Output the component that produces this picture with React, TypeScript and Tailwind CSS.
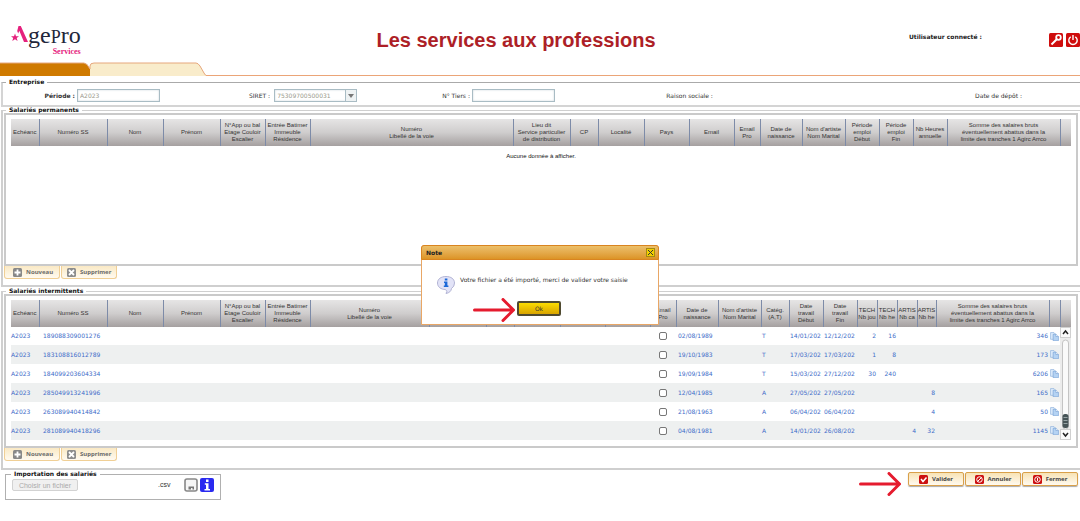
import React from "react";

type Col = { w: string; lines: string[] };

const identity: Col[] = [
  { w: "w-[28px]", lines: ["Echéanc"] },
  { w: "w-[68px]", lines: ["Numéro SS"] },
  { w: "w-[56px]", lines: ["Nom"] },
  { w: "w-[57px]", lines: ["Prénom"] },
  { w: "w-[45px]", lines: ["N°App ou bal", "Etage Couloir", "Escalier"] },
  { w: "w-[45px]", lines: ["Entrée Batimer", "Immeuble", "Résidence"] },
  { w: "w-auto", lines: ["Numéro", "Libellé de la voie"] },
  { w: "w-[57px]", lines: ["Lieu dit", "Service particulier", "de distribution"] },
  { w: "w-[28px]", lines: ["CP"] },
  { w: "w-[46px]", lines: ["Localité"] },
  { w: "w-[45px]", lines: ["Pays"] },
  { w: "w-[45px]", lines: ["Email"] },
  { w: "w-[26px]", lines: ["Email", "Pro"] },
  { w: "w-[42px]", lines: ["Date de", "naissance"] },
  { w: "w-[43px]", lines: ["Nom d'artiste", "Nom Marital"] },
];

const salary: Col = {
  w: "w-[113px]",
  lines: ["Somme des salaires bruts", "éventuellement abattus dans la", "limite des tranches 1 Agirc Arrco"],
};

const permanentCols: Col[] = [
  ...identity,
  { w: "w-[34px]", lines: ["Période", "emploi", "Début"] },
  { w: "w-[34px]", lines: ["Période", "emploi", "Fin"] },
  { w: "w-[34px]", lines: ["Nb Heures", "annuelle"] },
  salary,
  { w: "w-[11px]", lines: [""] },
];

const intermittentCols: Col[] = [
  ...identity,
  { w: "w-[28px]", lines: ["Catég.", "(A,T)"] },
  { w: "w-[34px]", lines: ["Date", "travail", "Début"] },
  { w: "w-[34px]", lines: ["Date", "travail", "Fin"] },
  { w: "w-[20px]", lines: ["TECH", "Nb jou"] },
  { w: "w-[20px]", lines: ["TECH", "Nb he"] },
  { w: "w-[20px]", lines: ["ARTIS", "Nb ca"] },
  { w: "w-[19px]", lines: ["ARTIS", "Nb he"] },
  salary,
  { w: "w-[11px]", lines: [""] },
];

const rows = [
  ["189088309001276", "02/08/1989", "T", "14/01/202", "12/12/202", "2", "16", "", "", "346"],
  ["183108816012789", "19/10/1983", "T", "17/03/202", "17/03/202", "1", "8", "", "", "173"],
  ["184099203604334", "19/09/1984", "T", "15/03/202", "27/12/202", "30", "240", "", "", "6206"],
  ["285049913241996", "12/04/1985", "A", "27/05/202", "27/05/202", "", "", "", "8", "165"],
  ["263089940414842", "21/08/1963", "A", "06/04/202", "06/04/202", "", "", "", "4", "50"],
  ["281089940418296", "04/08/1981", "A", "14/01/202", "26/08/202", "", "", "4", "32", "1145"],
];

function Cols({ cols }: { cols: Col[] }) {
  return (
    <colgroup>
      {cols.map((c, i) => (
        <col key={i} className={c.w} />
      ))}
    </colgroup>
  );
}

function Head({ cols }: { cols: Col[] }) {
  return (
    <thead>
      <tr className="h-[27px] bg-linear-to-b from-[#e6e5e5] via-[#cfcdcd] to-[#a5a0a0]">
        {cols.map((c, i) => (
          <th
            key={i}
            className="border-r border-[#7d8ba8] p-0 text-center align-middle font-['Liberation_Sans',sans-serif] text-[6px] leading-[7px] font-normal whitespace-nowrap text-[#333] last:border-r-0"
          >
            {c.lines.map((l, j) => (
              <span key={j} className="block">
                {l}
              </span>
            ))}
          </th>
        ))}
      </tr>
    </thead>
  );
}

function Group({ title, className, children }: { title: string; className?: string; children: React.ReactNode }) {
  return (
    <fieldset className={`min-w-0 ${className ?? ""}`}>
      <legend className="px-[3px] text-[6px] leading-[8px] font-bold text-[#111]">{title}</legend>
      {children}
    </fieldset>
  );
}

function CopyIcon() {
  return (
    <svg viewBox="0 0 16 16" className="block size-[9px]" aria-hidden="true">
      <path d="M1 1h6l3 3v9H1z" fill="#dcebfa" stroke="#7ea6d8" />
      <path d="M5.500 4h5l4.500 4v7.500H5.500z" fill="#b5d3f3" stroke="#6b97d0" />
      <path d="M10.500 4v4H15" fill="#fff" stroke="#6b97d0" />
    </svg>
  );
}

function Arrow() {
  return (
    <svg viewBox="0 0 42 24" className="h-[24px] w-[42px] shrink-0" fill="none" stroke="#e51b2e" strokeWidth="3" strokeLinecap="round" strokeLinejoin="round" aria-hidden="true">
      <path d="M1.500 12H40M30 1.500l10.500 10.500L30 22.500" />
    </svg>
  );
}

const rowAction =
  "flex h-[13px] w-[56px] items-center gap-[4px] rounded-b-[3px] border border-t-0 border-[#f0cf95] bg-linear-to-b from-[#fae9c4] to-[#fffaf0] font-['Noto_Sans',sans-serif] text-[6px] leading-[8px] font-bold text-[#6b6b6b]";

function RowActions() {
  return (
    <div className="-ml-[2px] flex gap-px">
      <button className={`${rowAction} pl-[8px]`}>
        <svg viewBox="0 0 9 9" className="size-[9px]" aria-hidden="true">
          <rect width="9" height="9" rx="1.500" fill="#888" />
          <path d="M4.500 1.500v6M1.500 4.500h6" stroke="#fff" strokeWidth="1.800" />
        </svg>
        Nouveau
      </button>
      <button className={`${rowAction} pl-[5px]`}>
        <svg viewBox="0 0 9 9" className="size-[9px]" aria-hidden="true">
          <rect width="9" height="9" rx="1.500" fill="#8d8d8d" />
          <path d="M2 2l5 5M7 2l-5 5" stroke="#fff" strokeWidth="1.800" />
        </svg>
        Supprimer
      </button>
    </div>
  );
}

function FooterButton({ label, children }: { label: string; children: React.ReactNode }) {
  return (
    <button className="flex h-[14px] w-[56px] items-center justify-center gap-[4px] rounded-[2px] border border-[#d9a04a] bg-linear-to-b from-[#f8e3b5] to-[#fffaf0] font-['Noto_Sans',sans-serif] text-[6px] leading-[8px] font-bold text-[#444] shadow-[0_1px_1px_#aaa]">
      <svg viewBox="0 0 18 18" className="size-[9px]" fill="none" stroke="#fff" strokeWidth="2" aria-hidden="true">
        <rect width="18" height="18" rx="3" fill="#cc1111" stroke="none" />
        {children}
      </svg>
      {label}
    </button>
  );
}

const field = "h-[13px] border border-[#a9bcc4] bg-white px-[2px] text-[6px] leading-[8px] text-[#9a9a8c] shadow-[inset_0_0_2px_#c5d2d8]";

export default function App() {
  return (
    <main className="relative bg-white font-['DejaVu_Sans',Verdana,sans-serif] text-[6px] leading-[8px] text-[#333]">
      <header className="grid h-[62px] grid-cols-[1fr_auto_1fr] items-start">
        <div className="flex pt-[25px] pl-[11px]">
          <svg viewBox="0 0 17 18" className="h-[18px] w-[17px]" aria-hidden="true">
            <path d="M7.500 1h2.300L17 17h-4L8.300 5.800 7.200 8.500 6.200 6z" fill="#e5217d" />
            <path d="M4 8.500l1 2.700h3L5.700 13l.9 3L4 14.200 1.300 16l.9-3L0 11.200h3z" fill="#e5217d" />
          </svg>
          <div className="flex flex-col items-end font-['Liberation_Serif',serif]">
            <span className="text-[24px] leading-[20px] text-[#22263a]">
              ge<span className="text-[18px] uppercase">p</span>ro
            </span>
            <span className="text-[8px] leading-[9px] font-bold text-[#e5217d]">Services</span>
          </div>
        </div>
        <h1 className="pt-[28px] pr-12 font-['Liberation_Sans',sans-serif] text-[20px] leading-[24px] font-bold text-[#ad1f27]">
          Les services aux professions
        </h1>
        <div className="flex justify-end gap-[3px] pt-[33px]">
          <span className="mr-[64px] font-bold text-[#222]">Utilisateur connecté :</span>
          <button aria-label="Changer le mot de passe" className="size-[14px]">
            <svg viewBox="0 0 14 14" aria-hidden="true">
              <rect width="14" height="14" rx="1.500" fill="#cf0d0d" />
              <circle cx="9.500" cy="4.500" r="2.300" fill="none" stroke="#fff" strokeWidth="1.800" />
              <path d="M8 6L2.500 11.500" stroke="#fff" strokeWidth="2" />
            </svg>
          </button>
          <button aria-label="Déconnexion" className="size-[14px]">
            <svg viewBox="0 0 14 14" fill="none" stroke="#fff" strokeWidth="1.400" aria-hidden="true">
              <rect width="14" height="14" rx="1.500" fill="#cf0d0d" stroke="none" />
              <path d="M4.700 3.800a4.200 4.200 0 1 0 4.600 0M7 2v5" />
            </svg>
          </button>
        </div>
      </header>

      <nav className="flex h-[14px]">
        <svg viewBox="0 0 206 14" className="h-[14px] w-[206px]" aria-hidden="true">
          <path d="M90 14V4q0-3 4-3h102q2 0 4 3l4 7q1 2.500 3 2.500V14z" fill="#f9eccb" />
          <path d="M0 1h84q3 0 6 6v7H0z" fill="#cf7a00" />
          <path d="M0 1h84q3 0 6 6V4q0-3 4-3h102q2 0 4 3l4 7q1 2.500 3 2.500" fill="none" stroke="#e6a77c" />
        </svg>
        <div className="flex-1 border-b border-[#eba578]" />
      </nav>

      <Group title="Entreprise" className="mt-[2px] ml-[1px] h-[29px] border-t border-b-2 border-l-2 border-t-[#aaa] border-b-[#d4d4d4] border-l-[#d4d4d4] pl-[3px]">
        <div className="flex items-center pt-[3px]">
          <label htmlFor="periode" className="w-[69px] text-right font-bold">Période :</label>
          <input id="periode" defaultValue="A2023" className={`${field} ml-[2px] w-[83px]`} />
          <div className="flex flex-1 items-center pr-[58px] pl-[89px]">
            <div className="flex items-center">
              <label htmlFor="siret">SIRET :</label>
              <div className="relative ml-[4px] flex">
                <select id="siret" className={`${field} w-[83px] appearance-none`}>
                  <option>75309700500031</option>
                </select>
                <span className="pointer-events-none absolute inset-y-0 right-0 flex w-[12px] items-center justify-center border border-[#a9bcc4] bg-[#eef2f3]">
                  <svg viewBox="0 0 6 4" className="w-[6px]" aria-hidden="true">
                    <path d="M0 0h6L3 4z" fill="#777" />
                  </svg>
                </span>
              </div>
            </div>
            <div className="grow-[84]" />
            <div className="flex items-center">
              <label htmlFor="tiers">N° Tiers :</label>
              <input id="tiers" className={`${field} ml-[2px] w-[83px]`} />
            </div>
            <div className="grow-[110]" />
            <span>Raison sociale :</span>
            <div className="grow-[259]" />
            <span>Date de dépôt :</span>
          </div>
        </div>
      </Group>

      <Group title="Salariés permanents" className="-mt-[1px] ml-[1px] border-t border-b-2 border-l-2 border-[#cfcfcf] pb-[6px] pl-[3px]">
        <div className="-mt-[1px] mr-[2px] -ml-[2px] h-[153px] border-2 border-[#cacaca] px-[5px] pt-[4px]">
          <table className="w-full table-fixed border-collapse">
            <Cols cols={permanentCols} />
            <Head cols={permanentCols} />
            <tbody>
              <tr>
                <td colSpan={permanentCols.length} className="pt-[6px] text-center font-['Liberation_Sans',sans-serif] text-[#111]">
                  Aucune donnée à afficher.
                </td>
              </tr>
            </tbody>
          </table>
        </div>
        <RowActions />
      </Group>

      <Group title="Salariés intermittents" className="ml-[1px] border-t border-b-2 border-l-2 border-[#cfcfcf] pb-[7px] pl-[3px]">
        <div className="-mt-[1px] mr-[2px] -ml-[2px] flex h-[154px] border-2 border-[#cacaca] px-[5px] pt-[4px]">
          <div className="min-w-0 flex-1">
            <table className="w-full table-fixed border-collapse">
              <Cols cols={intermittentCols} />
              <Head cols={intermittentCols} />
              <tbody>
                {rows.map((r, i) => (
                  <tr key={r[0]} className="h-[19px] whitespace-nowrap text-[#3d6cc9] first:h-[18px] even:bg-[#eef0f0]">
                    <td className="p-0">A2023</td>
                    <td className="p-0 pl-[4px]">{r[0]}</td>
                    {Array.from({ length: 10 }, (_, k) => (
                      <td key={k} />
                    ))}
                    <td className="p-0">
                      <input type="checkbox" aria-label={`Email Pro ${i + 1}`} className="ml-[9px] block size-[8px] appearance-none rounded-[2px] border border-[#777] bg-white" />
                    </td>
                    <td className="p-0 pl-[2px]">{r[1]}</td>
                    <td />
                    <td className="p-0 pl-[1px]">{r[2]}</td>
                    <td className="p-0 pl-[1px]">{r[3]}</td>
                    <td className="p-0 pl-[1px]">{r[4]}</td>
                    <td className="p-0 pr-px text-right">{r[5]}</td>
                    <td className="p-0 pr-px text-right">{r[6]}</td>
                    <td className="p-0 pr-px text-right">{r[7]}</td>
                    <td className="p-0 pr-px text-right">{r[8]}</td>
                    <td className="p-0 pr-px text-right">{r[9]}</td>
                    <td className="p-0 pl-px">
                      <CopyIcon />
                    </td>
                  </tr>
                ))}
              </tbody>
            </table>
          </div>
          <div className="flex h-[140px] w-[11px] flex-col">
            <div className="h-[27px] border-l border-[#7d8ba8] bg-linear-to-b from-[#e6e5e5] via-[#cfcdcd] to-[#a5a0a0]" />
            <svg viewBox="0 0 11 113" className="h-[113px] w-[11px]" aria-hidden="true">
              <rect width="11" height="113" fill="#ececec" />
              <rect x=".5" y=".5" width="10" height="10" fill="#fafafa" stroke="#d0d0d0" />
              <path d="M3 7l2.500-3L8 7" fill="none" stroke="#222" strokeWidth="1.500" />
              <rect x="2.500" y="13" width="6" height="89" rx="3" fill="#fafafa" stroke="#c4c4c4" />
              <rect x="2.500" y="87" width="6" height="14" rx="2.500" fill="#465356" />
              <path d="M3.500 90.500h4M3.500 93.500h4M3.500 96.500h4" stroke="#96a3a5" />
              <rect x=".5" y="102.500" width="10" height="10" fill="#fafafa" stroke="#d0d0d0" />
              <path d="M3 106l2.500 3L8 106" fill="none" stroke="#222" strokeWidth="1.500" />
            </svg>
          </div>
        </div>
        <RowActions />
      </Group>

      <footer className="flex items-start justify-between pr-[2px] pl-[5px]">
        <Group title="Importation des salariés" className="h-[30px] w-[216px] border border-[#b0b0b0] pl-[5px]">
          <div className="flex items-center pl-[1px] font-['Liberation_Sans',sans-serif]">
            <button className="h-[12px] w-[66px] rounded-[2px] border border-[#d2d2d2] bg-[#f0f0f0] text-[7px] leading-[9px] text-[#aaa]">Choisir un fichier</button>
            <span className="ml-[80px] text-[7px]">.csv</span>
            <button aria-label="Enregistrer" className="ml-[14px]">
              <svg viewBox="0 0 14 14" className="size-[14px]" aria-hidden="true">
                <rect x="1" y="1" width="12" height="12" rx="2" fill="#f6f6f6" stroke="#888" strokeWidth="1.600" />
                <path d="M4.500 8.500h5.500v3H8.500V10H7v1.500H4.500z" fill="#777" />
              </svg>
            </button>
            <button aria-label="Information" className="ml-[2px]">
              <svg viewBox="0 0 14 14" className="size-[14px]" aria-hidden="true">
                <rect width="14" height="14" rx="2" fill="#2a2af0" />
                <path d="M6 1.500h2.500V4H6zM4.800 5.200h3.700V11H10v1.500H4.500V11H6V6.700H4.800z" fill="#fff" />
              </svg>
            </button>
          </div>
        </Group>
        <div className="flex items-start gap-[1px] pt-[2px]">
          <div className="mr-[6px]">
            <Arrow />
          </div>
          <FooterButton label="Valider">
            <path d="M4 8l4 5 7-8" strokeWidth="3" />
          </FooterButton>
          <FooterButton label="Annuler">
            <circle cx="9" cy="9" r="5.500" />
            <path d="M5 13l8-8" />
          </FooterButton>
          <FooterButton label="Fermer">
            <circle cx="9" cy="9" r="5.500" />
            <path d="M9 6v6" />
          </FooterButton>
        </div>
      </footer>

      <section role="dialog" aria-label="Note" className="absolute top-[245px] left-1/2 h-[80px] w-[238px] -translate-x-1/2 rounded-t-[3px] border border-[#e9a766] bg-white">
        <div className="-mx-px -mt-px flex h-[15px] items-center justify-between rounded-t-[3px] border border-[#d98420] bg-linear-to-b from-[#ecc06a] to-[#dc9424] pr-[3px] pl-[4px] font-bold text-[#222]">
          Note
          <button aria-label="Fermer la note" className="flex size-[9px] items-center justify-center border border-[#a58a10] bg-[#f2cf00]">
            <svg viewBox="0 0 5 5" className="size-[5px]" aria-hidden="true">
              <path d="M0 0l5 5M5 0L0 5" stroke="#333" />
            </svg>
          </button>
        </div>
        <div className="flex items-start pt-[16px] pl-[15px]">
          <svg viewBox="0 0 18 18" className="size-[18px]" aria-hidden="true">
            <path d="M9 .5C4 .5.500 3 .500 7S4 13.500 8.500 13.500Q11 15 9 17.500q5-1 5.500-5Q17.500 10.500 17.500 7C17.500 3 14 .5 9 .5z" fill="#e2e3f7" stroke="#b2b3d4" />
            <path d="M7.800 2.500h2.600v2H7.800zM7 5.500h3.400v4h1V11H6.800V9.500h1V7H7z" fill="#1c68d8" />
          </svg>
          <p className="pl-[5px] text-[#333]">Votre fichier a été importé, merci de valider votre saisie</p>
        </div>
        <div className="absolute top-[52px] left-[51px] flex items-center gap-[2px]">
          <Arrow />
          <button className="mb-[3px] h-[15px] w-[44px] rounded-[2px] border-2 border-[#4f4a30] bg-linear-to-b from-[#fbdc00] to-[#d9a400] text-[#333]">Ok</button>
        </div>
      </section>
    </main>
  );
}
